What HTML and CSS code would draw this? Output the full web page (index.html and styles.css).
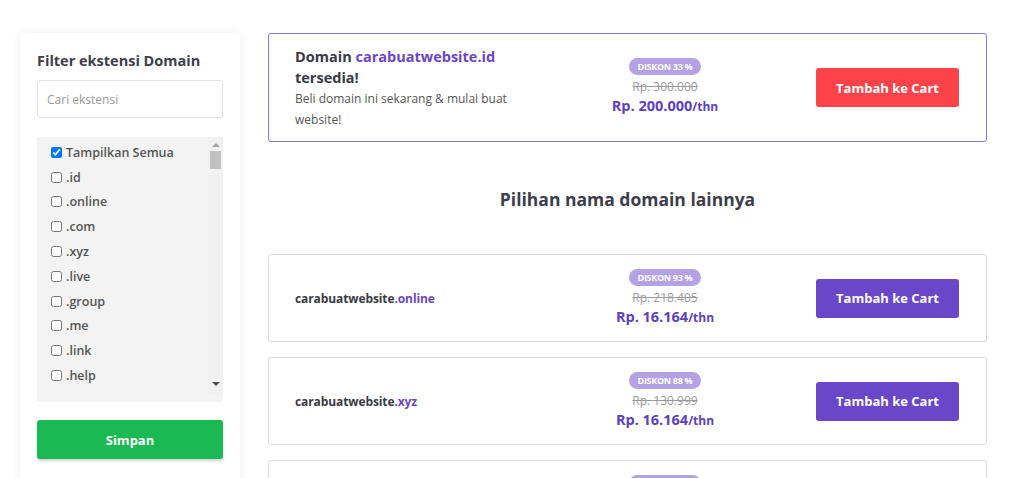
FILE: index.html
```html
<!DOCTYPE html>
<html lang="id">
<head>
    <meta charset="UTF-8">
    <title>Cek Domain</title>
    <link rel="stylesheet" href="styles.css">
</head>
<body>
    <div class="page">
        <aside class="filter">
            <h3 class="filter-title">Filter ekstensi Domain</h3>
            <input type="text" class="filter-search" placeholder="Cari ekstensi">
            <div class="ext-box">
                <ul class="ext-list">
                    <li><label><input type="checkbox" checked> Tampilkan Semua</label></li>
                    <li><label><input type="checkbox"> .id</label></li>
                    <li><label><input type="checkbox"> .online</label></li>
                    <li><label><input type="checkbox"> .com</label></li>
                    <li><label><input type="checkbox"> .xyz</label></li>
                    <li><label><input type="checkbox"> .live</label></li>
                    <li><label><input type="checkbox"> .group</label></li>
                    <li><label><input type="checkbox"> .me</label></li>
                    <li><label><input type="checkbox"> .link</label></li>
                    <li><label><input type="checkbox"> .help</label></li>
                </ul>
                <div class="scrollbar">
                    <span class="arrow-up"></span>
                    <span class="thumb"></span>
                    <span class="track"></span>
                    <span class="arrow-down"></span>
                </div>
            </div>
            <button class="btn-save">Simpan</button>
        </aside>

        <main class="results">
            <div class="domain-card main-card">
                <div class="domain-info">
                    <h4 class="avail">Domain <span class="accent">carabuatwebsite.id</span> tersedia!</h4>
                    <p class="avail-desc">Beli domain ini sekarang &amp; mulai buat website!</p>
                </div>
                <div class="price">
                    <span class="badge">DISKON 33 %</span>
                    <span class="old">Rp. 300.000</span>
                    <span class="now">Rp. 200.000<small>/thn</small></span>
                </div>
                <button class="btn-cart red">Tambah ke Cart</button>
            </div>

            <h2 class="section-title">Pilihan nama domain lainnya</h2>

            <div class="domain-card">
                <div class="domain-name">carabuatwebsite<span class="accent">.online</span></div>
                <div class="price">
                    <span class="badge">DISKON 93 %</span>
                    <span class="old">Rp. 218.405</span>
                    <span class="now">Rp. 16.164<small>/thn</small></span>
                </div>
                <button class="btn-cart">Tambah ke Cart</button>
            </div>
            <div class="domain-card">
                <div class="domain-name">carabuatwebsite<span class="accent">.xyz</span></div>
                <div class="price">
                    <span class="badge">DISKON 88 %</span>
                    <span class="old">Rp. 130.999</span>
                    <span class="now">Rp. 16.164<small>/thn</small></span>
                </div>
                <button class="btn-cart">Tambah ke Cart</button>
            </div>
            <div class="domain-card">
                <div class="domain-name">carabuatwebsite<span class="accent">.live</span></div>
                <div class="price">
                    <span class="badge">DISKON 80 %</span>
                    <span class="old">Rp. 385.000</span>
                    <span class="now">Rp. 76.164<small>/thn</small></span>
                </div>
                <button class="btn-cart">Tambah ke Cart</button>
            </div>
        </main>
    </div>
</body>
</html>
```

FILE: styles.css
```css
*{
    margin:0;
    padding:0;
    box-sizing: border-box;
}
body{
    font-family: "Open Sans", "Noto Sans", sans-serif;
    background: #fff;
    color: #3e3e4b;
    overflow: hidden;
}
ul{
    list-style: none;
}
.page{
    display: flex;
    gap: 28px;
    padding: 33px 37px 0 20px;
}

/* sidebar */
.filter{
    flex: 0 0 220px;
    background: #fff;
    padding: 18px 17px 24px;
    box-shadow: 0 0 10px rgba(0,0,0,.07);
    border-radius: 2px;
}
.filter-title{
    font-size: 14.5px;
    line-height: 20px;
    font-weight: 700;
    color: #3e3e4b;
    margin-bottom: 9px;
}
.filter-search{
    display: block;
    width: 100%;
    height: 38px;
    border: 1px solid #e2e2e2;
    border-radius: 3px;
    padding: 0 9px;
    font-family: inherit;
    font-size: 12px;
    outline: none;
}
.filter-search::placeholder{
    color: #9a9a9a;
}
.ext-box{
    display: flex;
    height: 265px;
    margin-top: 19px;
    background: #f3f3f3;
}
.ext-list{
    flex: 1;
    overflow: hidden;
    padding: 3px 0 0 14px;
}
.ext-list li{
    height: 24.8px;
    display: flex;
    align-items: center;
    font-size: 12.5px;
    font-weight: 600;
    color: #555;
}
.ext-list label{
    display: flex;
    align-items: center;
    gap: 4px;
}
.ext-list input{
    width: 11px;
    height: 11px;
    margin: 0;
}
.scrollbar{
    flex: 0 0 15px;
    height: 257px;
    background: #f1f1f1;
    display: flex;
    flex-direction: column;
    align-items: center;
}
.arrow-up,.arrow-down{
    width: 0;
    height: 0;
    border-left: 4px solid transparent;
    border-right: 4px solid transparent;
    margin: 6px 0 4px;
}
.arrow-up{
    border-bottom: 4px solid #a3a3a3;
}
.arrow-down{
    border-top: 4px solid #505050;
    margin: 4px 0 8px;
}
.thumb{
    width: 11px;
    height: 18px;
    background: #c1c1c1;
}
.track{
    flex: 1;
}
.btn-save{
    display: block;
    width: 100%;
    height: 39px;
    margin-top: 18px;
    border: 0;
    border-radius: 3px;
    background: #1bb954;
    color: #fff;
    font-family: inherit;
    font-size: 13px;
    font-weight: 700;
    box-shadow: 0 2px 3px rgba(0,0,0,.18);
}

/* results */
.results{
    flex: 1;
    display: flex;
    flex-direction: column;
    gap: 15px;
}
.domain-card{
    display: grid;
    grid-template-columns: 240px 260px 1fr;
    align-items: center;
    height: 88px;
    padding: 0 27px 0 26px;
    border: 1px solid #dcdcdc;
    border-radius: 3px;
    background: #fff;
}
.main-card{
    height: 109px;
    border-color: #8c74d2;
}
.accent{
    color: #6a46c8;
}
.avail{
    font-size: 14.5px;
    line-height: 21px;
    font-weight: 700;
    color: #3a3a44;
}
.avail-desc{
    font-size: 12px;
    line-height: 21px;
    color: #555;
}
.domain-name{
    font-size: 12px;
    font-weight: 700;
    color: #3a3a44;
    letter-spacing: -.1px;
}
.price{
    display: flex;
    flex-direction: column;
    align-items: center;
}
.badge{
    height: 17px;
    line-height: 17px;
    padding: 0 9px;
    border-radius: 9px;
    background: #b3a2e6;
    color: #fff;
    font-size: 9px;
    font-weight: 700;
    letter-spacing: -.3px;
}
.old{
    margin-top: 3px;
    font-size: 12px;
    line-height: 18px;
    color: #9b9b9b;
    text-decoration: line-through;
}
.now{
    font-size: 14.5px;
    line-height: 20px;
    font-weight: 700;
    color: #5c3fc2;
}
.now small{
    font-size: 12px;
}
.btn-cart{
    justify-self: end;
    width: 143px;
    height: 39px;
    border: 0;
    border-radius: 3px;
    background: #6a46c8;
    color: #fff;
    font-family: inherit;
    font-size: 13px;
    font-weight: 700;
}
.btn-cart.red{
    background: #fd434a;
}
.section-title{
    text-align: center;
    font-size: 17.5px;
    line-height: 26px;
    font-weight: 700;
    color: #3e3e4b;
    margin: 29px 0 27px;
}
```
